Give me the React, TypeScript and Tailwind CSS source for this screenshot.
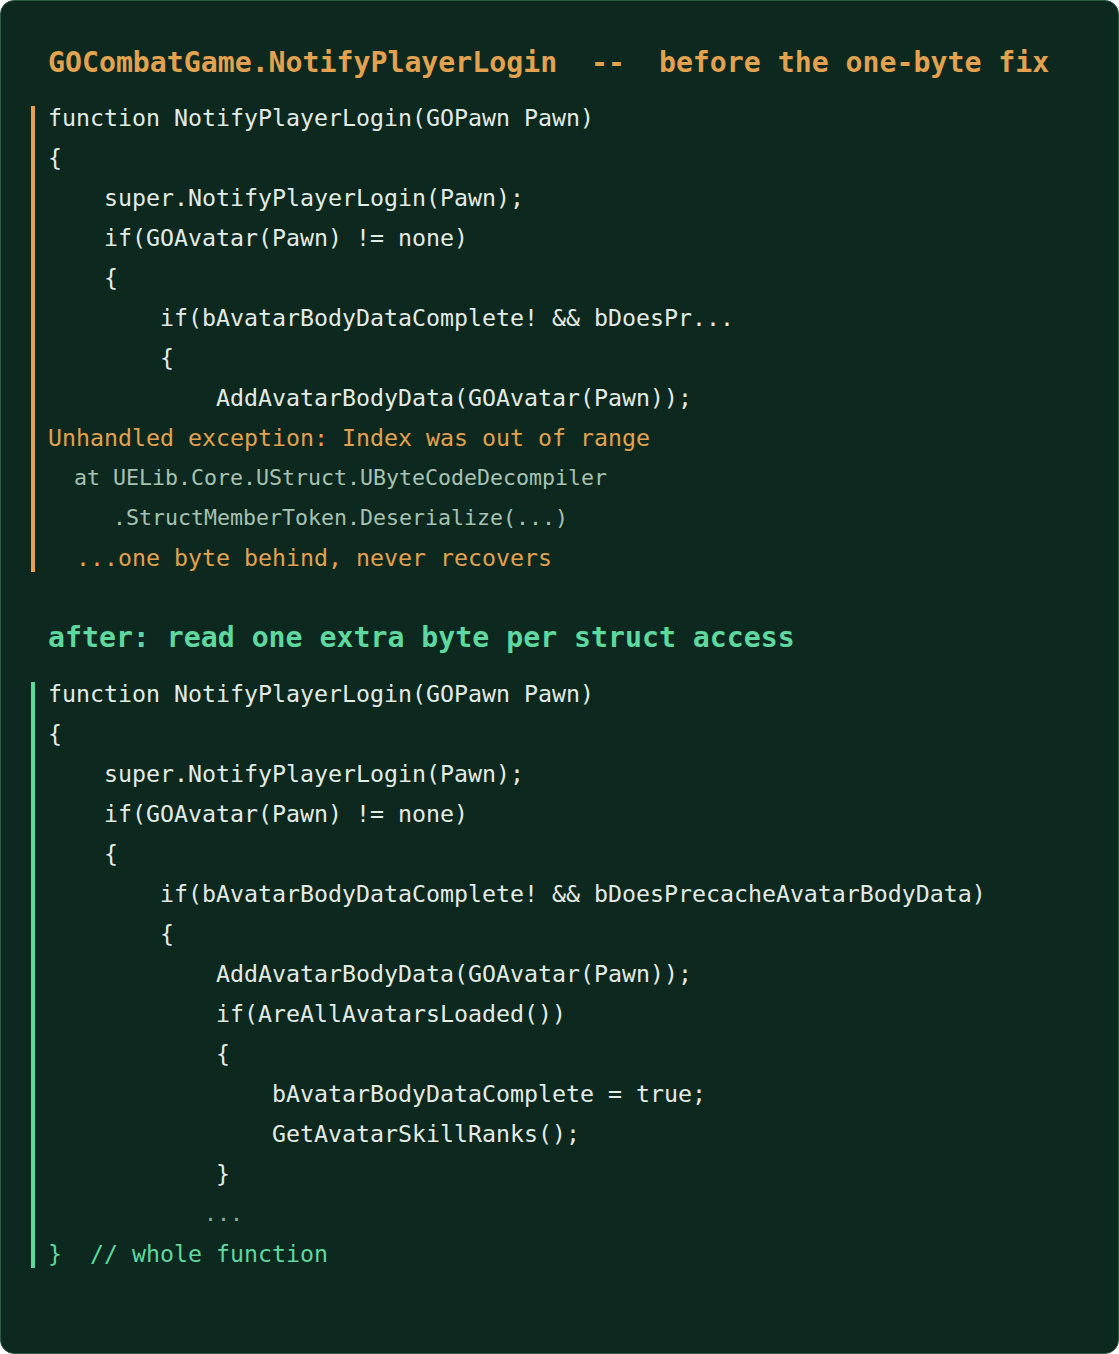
const mono = "font-['DejaVu_Sans_Mono',monospace]";

type Line = { text: string; tone?: "code" | "warn" | "trace" | "good" | "dim" };

const before: Line[] = [
  { text: "function NotifyPlayerLogin(GOPawn Pawn)" },
  { text: "{" },
  { text: "    super.NotifyPlayerLogin(Pawn);" },
  { text: "    if(GOAvatar(Pawn) != none)" },
  { text: "    {" },
  { text: "        if(bAvatarBodyDataComplete! && bDoesPr..." },
  { text: "        {" },
  { text: "            AddAvatarBodyData(GOAvatar(Pawn));" },
  { text: "Unhandled exception: Index was out of range", tone: "warn" },
  { text: "  at UELib.Core.UStruct.UByteCodeDecompiler", tone: "trace" },
  { text: "     .StructMemberToken.Deserialize(...)", tone: "trace" },
  { text: "  ...one byte behind, never recovers", tone: "warn" },
];

const after: Line[] = [
  { text: "function NotifyPlayerLogin(GOPawn Pawn)" },
  { text: "{" },
  { text: "    super.NotifyPlayerLogin(Pawn);" },
  { text: "    if(GOAvatar(Pawn) != none)" },
  { text: "    {" },
  { text: "        if(bAvatarBodyDataComplete! && bDoesPrecacheAvatarBodyData)" },
  { text: "        {" },
  { text: "            AddAvatarBodyData(GOAvatar(Pawn));" },
  { text: "            if(AreAllAvatarsLoaded())" },
  { text: "            {" },
  { text: "                bAvatarBodyDataComplete = true;" },
  { text: "                GetAvatarSkillRanks();" },
  { text: "            }" },
  { text: "            ...", tone: "dim" },
  { text: "}  // whole function", tone: "good" },
];

const toneClass: Record<string, string> = {
  code: "text-[23.25px] text-[#e3ebe5]",
  warn: "text-[23.25px] text-[#e2a24f]",
  good: "text-[23.25px] text-[#5fd89f]",
  trace: "text-[21.6px] text-[#a7c2b2]",
  dim: "text-[21.6px] text-[#8fa99a]",
};

function CodeBlock({ lines, accent }: { lines: Line[]; accent: string }) {
  return (
    <div className={`flex flex-col gap-[16px] border-l-4 pb-[2px] pl-[13px] ${accent}`}>
      {lines.map((line, i) => (
        <div key={i} className={`whitespace-pre leading-[24px] ${toneClass[line.tone ?? "code"]}`}>
          {line.text}
        </div>
      ))}
    </div>
  );
}

export default function App() {
  return (
    <div className={`h-[1354px] w-[1119px] rounded-[14px] border border-[#2e5a45] bg-[#0d291f] px-[30px] pt-[45px] ${mono}`}>
      <h1 className="whitespace-pre pl-[17px] text-[28.2px] font-bold leading-[34px] text-[#e2a24f]">
        GOCombatGame.NotifyPlayerLogin  --  before the one-byte fix
      </h1>
      <div className="mt-[26px]">
        <CodeBlock lines={before} accent="border-[#e2a24f]" />
      </div>
      <h2 className="mt-[49px] whitespace-pre pl-[17px] text-[28.2px] font-bold leading-[34px] text-[#5fd89f]">
        after: read one extra byte per struct access
      </h2>
      <div className="mt-[27px]">
        <CodeBlock lines={after} accent="border-[#5fd89f]" />
      </div>
    </div>
  );
}
